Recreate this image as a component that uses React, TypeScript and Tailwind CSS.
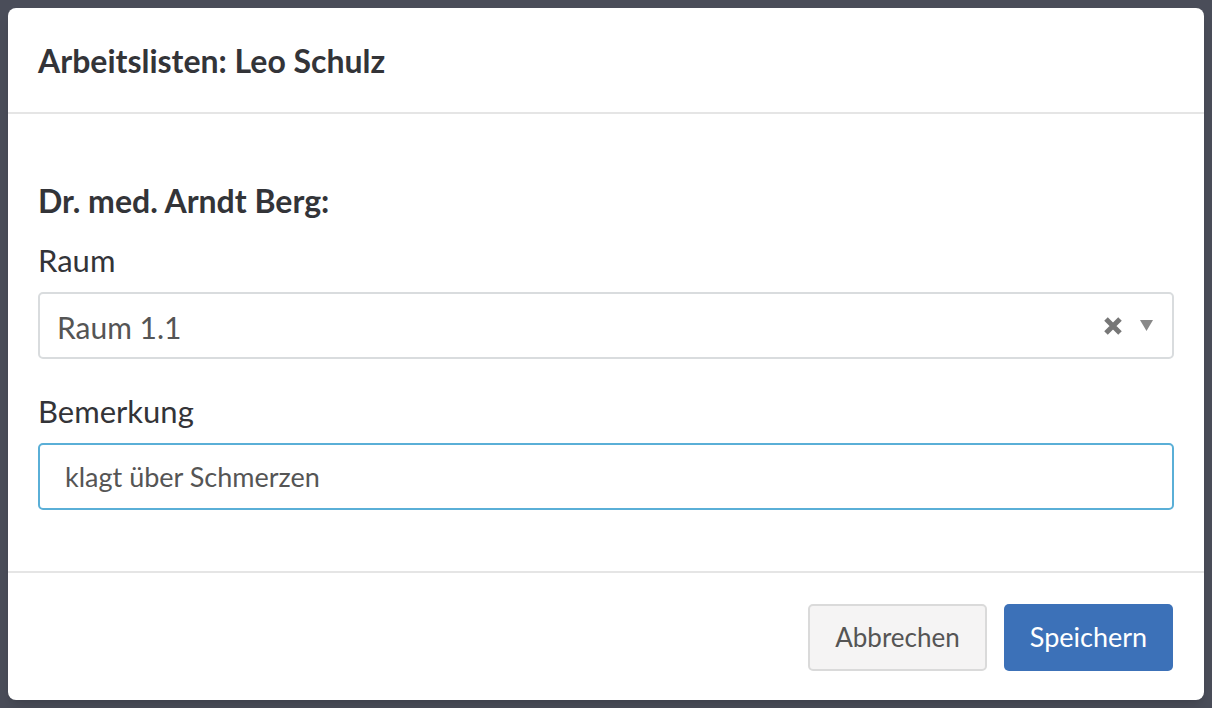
import React from 'react';

const font = { fontFamily: 'Lato, "Open Sans", sans-serif' };

export default function App() {
  return (
    <div className="h-[708px] w-full bg-[#4a4d59] p-2" style={font}>
      <div className="flex h-full flex-col rounded-lg bg-white shadow-lg">
        {/* Header */}
        <div className="flex h-[106px] items-center border-b-2 border-[#e5e5e5] px-[30px] pt-[2px]">
          <h4 className="text-[32px] font-bold text-[#333438]">Arbeitslisten: Leo Schulz</h4>
        </div>

        {/* Body */}
        <div className="flex-1 px-[30px] pt-[67px]">
          <div className="h-[40px] text-[32px] leading-[40px] font-bold text-[#333438]">
            Dr. med. Arndt Berg:
          </div>

          <label className="mt-[19px] block h-[40px] text-[31px] leading-[40px] text-[#333438]">Raum</label>
          <div className="mt-[12px] flex h-[67px] items-center rounded-[5px] border-2 border-[#d9dcde] pr-[19px] pl-[17px]">
            <span className="flex-1 pt-[3px] text-[30px] text-[#555]">Raum 1.1</span>
            <svg width="20" height="20" viewBox="0 0 20 20" className="mr-[17px]">
              <path d="M3 3 L17 17 M17 3 L3 17" stroke="#777" strokeWidth="5" strokeLinecap="butt" />
            </svg>
            <svg width="13" height="11" viewBox="0 0 13 11">
              <path d="M0 0 H13 L6.5 11 Z" fill="#888" />
            </svg>
          </div>

          <label className="mt-[32px] block h-[40px] text-[31px] leading-[40px] text-[#333438]">Bemerkung</label>
          <div className="mt-[12px] flex h-[67px] items-center rounded-[5px] border-2 border-[#5aafd7] px-[25px]">
            <span className="pt-[2px] text-[27px] text-[#555]">klagt über Schmerzen</span>
          </div>
        </div>

        {/* Footer */}
        <div className="flex h-[129px] justify-end gap-[17px] border-t-2 border-[#e5e5e5] pt-[31px] pr-[31px]">
          <button className="h-[67px] w-[179px] rounded-[5px] border-2 border-[#dadada] bg-[#f5f4f4] text-[26px] text-[#555]">
            Abbrechen
          </button>
          <button className="h-[67px] w-[169px] rounded-[5px] bg-[#3c71b8] text-[27px] text-white">
            Speichern
          </button>
        </div>
      </div>
    </div>
  );
}
